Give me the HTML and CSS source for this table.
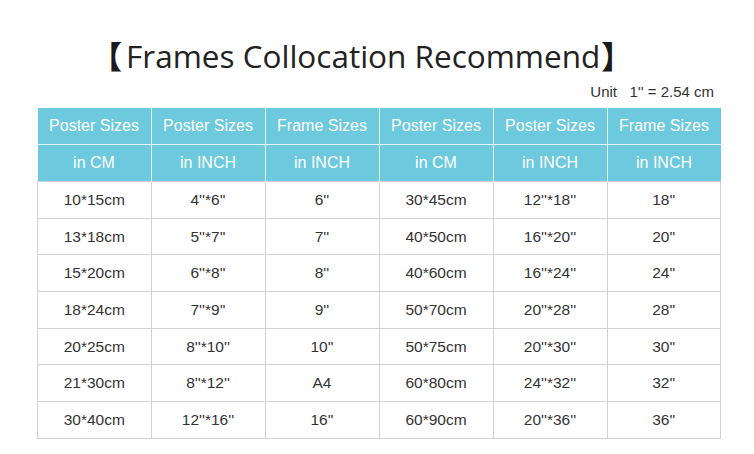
FILE: index.html
```html
<!DOCTYPE html>
<html>
<head>
<meta charset="utf-8">
<link rel="stylesheet" href="styles.css">
</head>
<body>
<div class="page">
  <h1 class="title"><span class="br br-l">【</span>Frames Collocation Recommend<span class="br br-r">】</span></h1>
  <div class="unit">Unit&nbsp;&nbsp;&nbsp;1'' = 2.54 cm</div>
  <table class="sizes">
    <thead>
      <tr><th>Poster Sizes</th><th>Poster Sizes</th><th>Frame Sizes</th><th>Poster Sizes</th><th>Poster Sizes</th><th>Frame Sizes</th></tr>
      <tr><th>in CM</th><th>in INCH</th><th>in INCH</th><th>in CM</th><th>in INCH</th><th>in INCH</th></tr>
    </thead>
    <tbody>
      <tr><td>10*15cm</td><td>4''*6''</td><td>6''</td><td>30*45cm</td><td>12''*18''</td><td>18''</td></tr>
      <tr><td>13*18cm</td><td>5''*7''</td><td>7''</td><td>40*50cm</td><td>16''*20''</td><td>20''</td></tr>
      <tr><td>15*20cm</td><td>6''*8''</td><td>8''</td><td>40*60cm</td><td>16''*24''</td><td>24''</td></tr>
      <tr><td>18*24cm</td><td>7''*9''</td><td>9''</td><td>50*70cm</td><td>20''*28''</td><td>28''</td></tr>
      <tr><td>20*25cm</td><td>8''*10''</td><td>10''</td><td>50*75cm</td><td>20''*30''</td><td>30''</td></tr>
      <tr><td>21*30cm</td><td>8''*12''</td><td>A4</td><td>60*80cm</td><td>24''*32''</td><td>32''</td></tr>
      <tr><td>30*40cm</td><td>12''*16''</td><td>16''</td><td>60*90cm</td><td>20''*36''</td><td>36''</td></tr>
    </tbody>
  </table>
</div>
</body>
</html>
```
FILE: styles.css
```css
html, body {
  margin: 0;
  padding: 0;
  background: #fff;
}
.page {
  width: 754px;
  height: 454px;
  padding-top: 35px;
  box-sizing: border-box;
  font-family: "Liberation Sans", Arial, sans-serif;
}
.title {
  margin: 0 0 0 91px;
  font-family: "Open Sans", sans-serif;
  font-weight: 400;
  font-size: 31.5px;
  line-height: 40px;
  color: #222;
  white-space: nowrap;
}
.title .br {
  font-family: "Noto Sans CJK SC", sans-serif;
  font-weight: 900;
  font-size: 31px;
  color: #1a1a1a;
}
.title .br-l {
  margin-right: 4px;
}
.title .br-r {
  margin-left: 1px;
}
.unit {
  margin: 7px 40px 0 0;
  text-align: right;
  font-size: 15px;
  line-height: 17px;
  color: #333;
}
.sizes {
  margin: 8px 0 0 37px;
  border-collapse: collapse;
  table-layout: fixed;
  width: 678px;
}
.sizes th {
  background: #6dc9dd;
  color: #fff;
  font-weight: 400;
  font-size: 16px;
  height: 36px;
  padding: 0;
  border-left: 1px solid #e6f6fa;
  border-top: 1px solid #e6f6fa;
  text-align: center;
  width: 113px;
}
.sizes thead tr:first-child th {
  border-top: none;
}
.sizes th:first-child {
  border-left: none;
}
.sizes td {
  height: 35.7px;
  padding: 0;
  text-align: center;
  font-size: 15.5px;
  color: #333;
  border: 1px solid #d2d2d2;
}
```
